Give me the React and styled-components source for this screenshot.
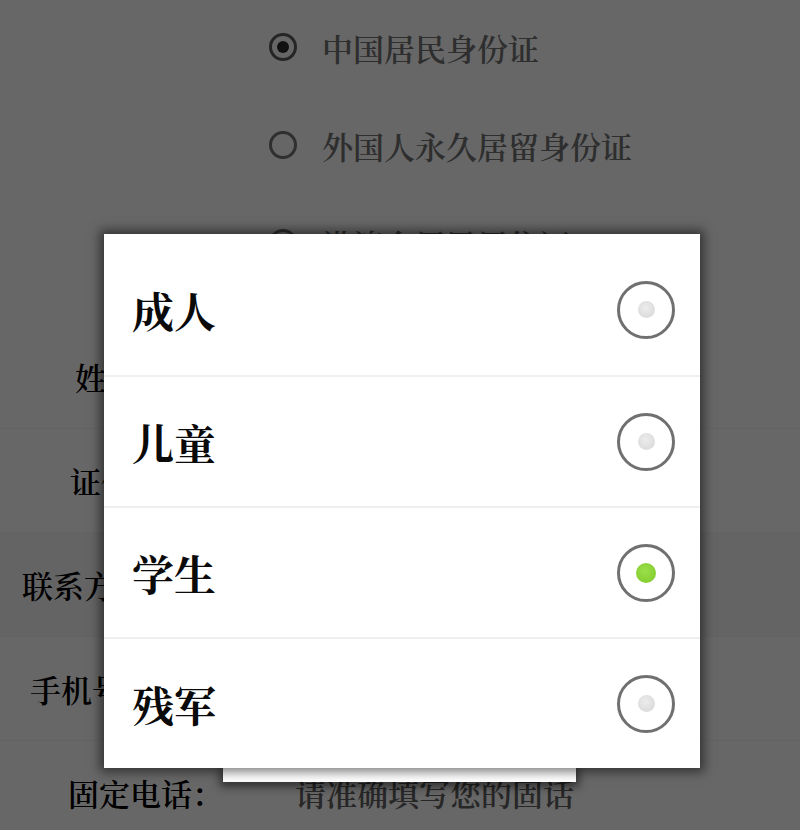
import React from "react";
import styled, { createGlobalStyle } from "styled-components";

const GlobalStyle = createGlobalStyle`
  html, body {
    margin: 0;
    padding: 0;
    width: 800px;
    height: 830px;
    overflow: hidden;
    background: #676767;
  }
  * { box-sizing: border-box; }
`;

const serif = `"Noto Serif CJK SC", "Noto Sans CJK SC", "Liberation Serif", serif`;

const Page = styled.div`
  position: relative;
  width: 800px;
  height: 830px;
  overflow: hidden;
  background: #f6f6f6;
  font-family: ${serif};
  display: flex;
  flex-direction: column;
`;

const IdList = styled.div`
  display: flex;
  flex-direction: column;
  margin-top: -2px;
`;

const IdOption = styled.div`
  height: 98px;
  display: flex;
  align-items: center;
  gap: 25px;
  padding-left: 269px;
  font-size: 31px;
  font-weight: 600;
  color: #6e6e6e;
`;

const SmallRadio = styled.span`
  width: 28px;
  height: 28px;
  border-radius: 50%;
  border: 3px solid ${(p) => (p.$checked ? "#5a5a5a" : "#707070")};
  background: #f4f4f4;
  display: flex;
  align-items: center;
  justify-content: center;
  &::after {
    content: "";
    width: 12px;
    height: 12px;
    border-radius: 50%;
    background: ${(p) => (p.$checked ? "#2a2a2a" : "transparent")};
  }
`;

const Form = styled.div`
  display: flex;
  flex-direction: column;
  margin-top: 33px;
`;

const FormRow = styled.div`
  height: 104px;
  display: flex;
  align-items: center;
  border-bottom: 1px solid #ebebeb;
  background: ${(p) => (p.$shade ? "#eeeeee" : "transparent")};
  font-size: 31px;
  font-weight: 600;
`;

const FieldLabel = styled.span`
  width: 295px;
  padding-left: ${(p) => p.$indent}px;
  color: #000;
  white-space: nowrap;
`;

const FieldValue = styled.span`
  color: #5e5e5e;
  white-space: nowrap;
`;

const Overlay = styled.div`
  position: absolute;
  inset: 0;
  background: rgba(0, 0, 0, 0.58);
`;

const Dialog = styled.div`
  position: absolute;
  left: 104px;
  top: 234px;
  width: 596px;
  display: flex;
  flex-direction: column;
`;

const Panel = styled.div`
  position: relative;
  z-index: 1;
  background: #fff;
  padding-top: 10px;
  box-shadow: 0 0 10px 4px rgba(0, 0, 0, 0.5);
  display: flex;
  flex-direction: column;
`;

const Tab = styled.div`
  width: 353px;
  height: 14px;
  margin-left: 119px;
  background: #fff;
  box-shadow: 0 2px 8px 3px rgba(0, 0, 0, 0.5);
`;

const Option = styled.div`
  height: 131px;
  display: flex;
  align-items: center;
  justify-content: space-between;
  padding: 0 25px 0 28px;
  border-top: ${(p) => (p.$first ? "none" : "2px solid #efefef")};
`;

const OptionText = styled.span`
  font-size: 42px;
  font-weight: 700;
  color: #0a0a0a;
`;

const Radio = styled.span`
  width: 58px;
  height: 58px;
  border-radius: 50%;
  border: 3px solid #707070;
  display: flex;
  align-items: center;
  justify-content: center;
  background: #fff;
  &::after {
    content: "";
    width: ${(p) => (p.$checked ? 20 : 17)}px;
    height: ${(p) => (p.$checked ? 20 : 17)}px;
    border-radius: 50%;
    background: ${(p) =>
      p.$checked
        ? "radial-gradient(circle at 45% 40%, #9be04a 0%, #86cf32 70%, #78bf2a 100%)"
        : "radial-gradient(circle at 45% 40%, #ececec 0%, #dcdcdc 70%, #cfcfcf 100%)"};
  }
`;

const idOptions = [
  { text: "中国居民身份证", checked: true },
  { text: "外国人永久居留身份证", checked: false },
  { text: "港澳台居民居住证", checked: false },
];

const fields = [
  { label: "姓名：", indent: 75, value: "请输入您的姓名" },
  { label: "证件号码：", indent: 70, value: "请输入证件号码" },
  { label: "联系方式：", indent: 22, value: "", shade: true },
  { label: "手机号码：", indent: 30, value: "请输入手机号码" },
  { label: "固定电话：", indent: 68, value: "请准确填写您的固话" },
];

const choices = [
  { text: "成人", checked: false },
  { text: "儿童", checked: false },
  { text: "学生", checked: true },
  { text: "残军", checked: false },
];

export default function App() {
  return (
    <>
      <GlobalStyle />
      <Page>
        <IdList>
          {idOptions.map((o) => (
            <IdOption key={o.text}>
              <SmallRadio $checked={o.checked} />
              <span>{o.text}</span>
            </IdOption>
          ))}
        </IdList>
        <Form>
          {fields.map((f) => (
            <FormRow key={f.label} $shade={f.shade}>
              <FieldLabel $indent={f.indent}>{f.label}</FieldLabel>
              <FieldValue>{f.value}</FieldValue>
            </FormRow>
          ))}
        </Form>
        <Overlay />
        <Dialog>
          <Panel>
            {choices.map((c, i) => (
              <Option key={c.text} $first={i === 0}>
                <OptionText>{c.text}</OptionText>
                <Radio $checked={c.checked} />
              </Option>
            ))}
          </Panel>
          <Tab />
        </Dialog>
      </Page>
    </>
  );
}
